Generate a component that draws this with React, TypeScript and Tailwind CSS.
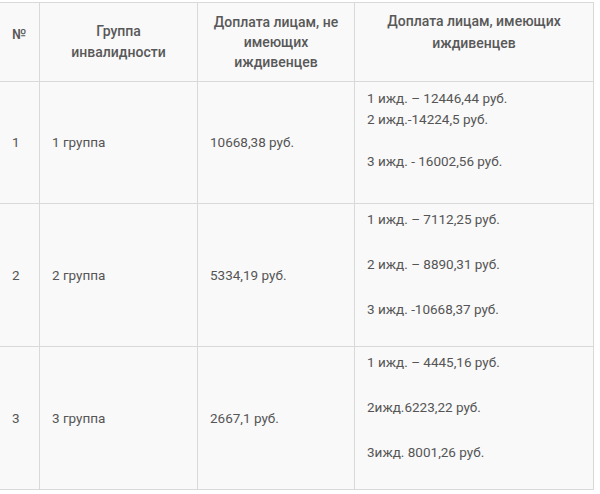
import React from 'react'

const cell = 'border-r border-b border-[#d9d9d9] px-3 text-[13.5px] text-[#555]'
const head = 'text-[14px] font-medium text-[#585858]'

const rows = [
  {
    n: '1',
    group: '1 группа',
    single: '10668,38 руб.',
    lines: ['1 ижд. – 12446,44 руб.', '2 ижд.-14224,5 руб.', '', '3 ижд. - 16002,56 руб.'],
    gap: false,
  },
  {
    n: '2',
    group: '2 группа',
    single: '5334,19 руб.',
    lines: ['1 ижд. – 7112,25 руб.', '2 ижд. – 8890,31 руб.', '3 ижд. -10668,37 руб.'],
    gap: true,
  },
  {
    n: '3',
    group: '3 группа',
    single: '2667,1 руб.',
    lines: ['1 ижд. – 4445,16 руб.', '2ижд.6223,22 руб.', '3ижд. 8001,26 руб.'],
    gap: true,
  },
]

export default function App() {
  return (
    <div className="w-[600px] h-[494px] bg-white pt-[2px] font-['Roboto',sans-serif]">
      <div className="w-[594px] grid grid-cols-[40px_158px_157px_239px] grid-rows-[79px_122px_143px_143px] border-t border-[#d9d9d9] bg-[#f9f9f9]">
        <div className={`${cell} ${head} pt-[21px]`}>№</div>
        <div className={`${cell} ${head} flex flex-col items-center justify-center text-center leading-[21px]`}>
          <span>Группа</span>
          <span>инвалидности</span>
        </div>
        <div className={`${cell} ${head} flex flex-col items-center justify-center text-center leading-[20px]`}>
          <span>Доплата лицам, не</span>
          <span>имеющих</span>
          <span>иждивенцев</span>
        </div>
        <div className={`${cell} ${head} pt-[7px] flex flex-col items-center text-center leading-[22px]`}>
          <span>Доплата лицам, имеющих</span>
          <span>иждивенцев</span>
        </div>

        {rows.map((r) => (
          <React.Fragment key={r.n}>
            <div className={`${cell} flex items-center`}>{r.n}</div>
            <div className={`${cell} flex items-center`}>{r.group}</div>
            <div className={`${cell} flex items-center`}>{r.single}</div>
            <div
              className={`${cell} flex flex-col ${r.gap ? 'pt-[5px] gap-[24px] leading-[21px]' : 'pt-[6px] leading-[21px]'}`}
            >
              {r.lines.map((l, i) => (
                <span key={i} className="h-[21px]">
                  {l}
                </span>
              ))}
            </div>
          </React.Fragment>
        ))}
      </div>
    </div>
  )
}
